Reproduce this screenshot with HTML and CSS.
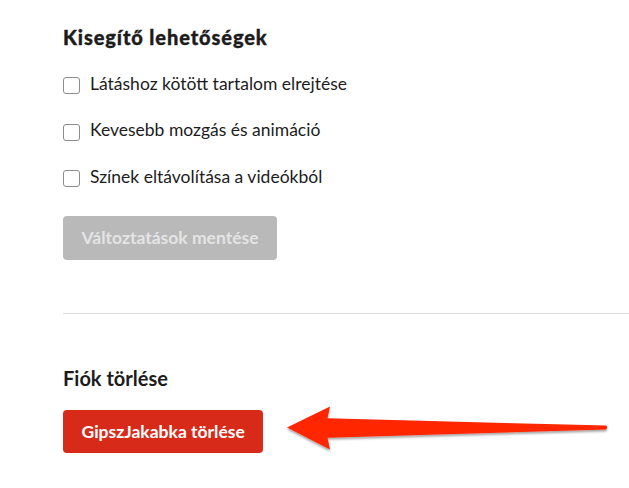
FILE: index.html
```html
<!DOCTYPE html>
<html lang="hu">
<head>
<meta charset="utf-8">
<link rel="stylesheet" href="styles.css">
</head>
<body>
<main class="page">
  <section class="section">
    <h2 class="title title-strong">Kisegítő lehetőségek</h2>
    <ul class="options">
      <li class="option"><span class="box"></span><span class="label">Látáshoz kötött tartalom elrejtése</span></li>
      <li class="option"><span class="box"></span><span class="label">Kevesebb mozgás és animáció</span></li>
      <li class="option"><span class="box"></span><span class="label">Színek eltávolítása a videókból</span></li>
    </ul>
    <button class="btn btn-disabled" type="button">Változtatások mentése</button>
  </section>
  <hr class="divider">
  <section class="section section-danger">
    <h2 class="title">Fiók törlése</h2>
    <button class="btn btn-danger" type="button">GipszJakabka törlése</button>
  </section>
</main>
<svg class="arrow" width="629" height="488" viewBox="0 0 629 488" aria-hidden="true">
  <defs>
    <filter id="sh" x="-10%" y="-50%" width="120%" height="200%">
      <feGaussianBlur in="SourceAlpha" stdDeviation="1.2"/>
      <feOffset dx="0" dy="1.5" result="b"/>
      <feComponentTransfer><feFuncA type="linear" slope="0.35"/></feComponentTransfer>
      <feMerge><feMergeNode/><feMergeNode in="SourceGraphic"/></feMerge>
    </filter>
  </defs>
  <path filter="url(#sh)" fill="#ff2600" d="M287 427.5 L330 406.5 L327.5 418.3 L606 425.6 Q608.5 427.6 606 429.6 L327.5 437.8 L330 449.5 Z"/>
</svg>
</body>
</html>
```
FILE: styles.css
```css
html, body {
  margin: 0;
  padding: 0;
  background: #ffffff;
}
body {
  font-family: Lato, "Noto Sans", sans-serif;
  color: #1d1c1d;
  width: 629px;
  height: 488px;
  overflow: hidden;
  position: relative;
}
.page {
  padding: 23px 0 0 63px;
}
.section {
  display: flex;
  flex-direction: column;
  align-items: flex-start;
}
.title {
  margin: 0;
  font-size: 20px;
  line-height: 28px;
  font-weight: 700;
}
.title-strong {
  font-weight: 900;
  letter-spacing: 0.9px;
  -webkit-text-stroke: 0.35px currentColor;
}
.options {
  list-style: none;
  margin: 20.6px 0 0;
  padding: 0;
  display: flex;
  flex-direction: column;
  gap: 22.7px;
}
.option {
  display: flex;
  align-items: flex-start;
  gap: 10px;
  font-size: 17.5px;
  line-height: 24px;
}
.box {
  width: 15px;
  height: 15px;
  margin-top: 5.4px;
  border: 1px solid #8d8c8d;
  border-radius: 3px;
  background: #fff;
  flex: none;
}
.btn {
  font-family: Lato, "Noto Sans", sans-serif;
  font-weight: 700;
  font-size: 17.5px;
  border: none;
  border-radius: 4px;
  padding: 0 18.5px;
  cursor: pointer;
}
.btn-disabled {
  margin-top: 26.7px;
  height: 44px;
  background: #b9b9ba;
  color: #e4e4e4;
}
.divider {
  margin: 53px 0 0;
  border: none;
  border-top: 1px solid #dddddd;
  height: 0;
}
.section-danger {
  margin-top: 50px;
}
.btn-danger {
  margin-top: 18.7px;
  height: 43px;
  background: #d82a19;
  color: #ffffff;
}
.arrow {
  position: absolute;
  left: 0;
  top: 0;
  pointer-events: none;
}
```
